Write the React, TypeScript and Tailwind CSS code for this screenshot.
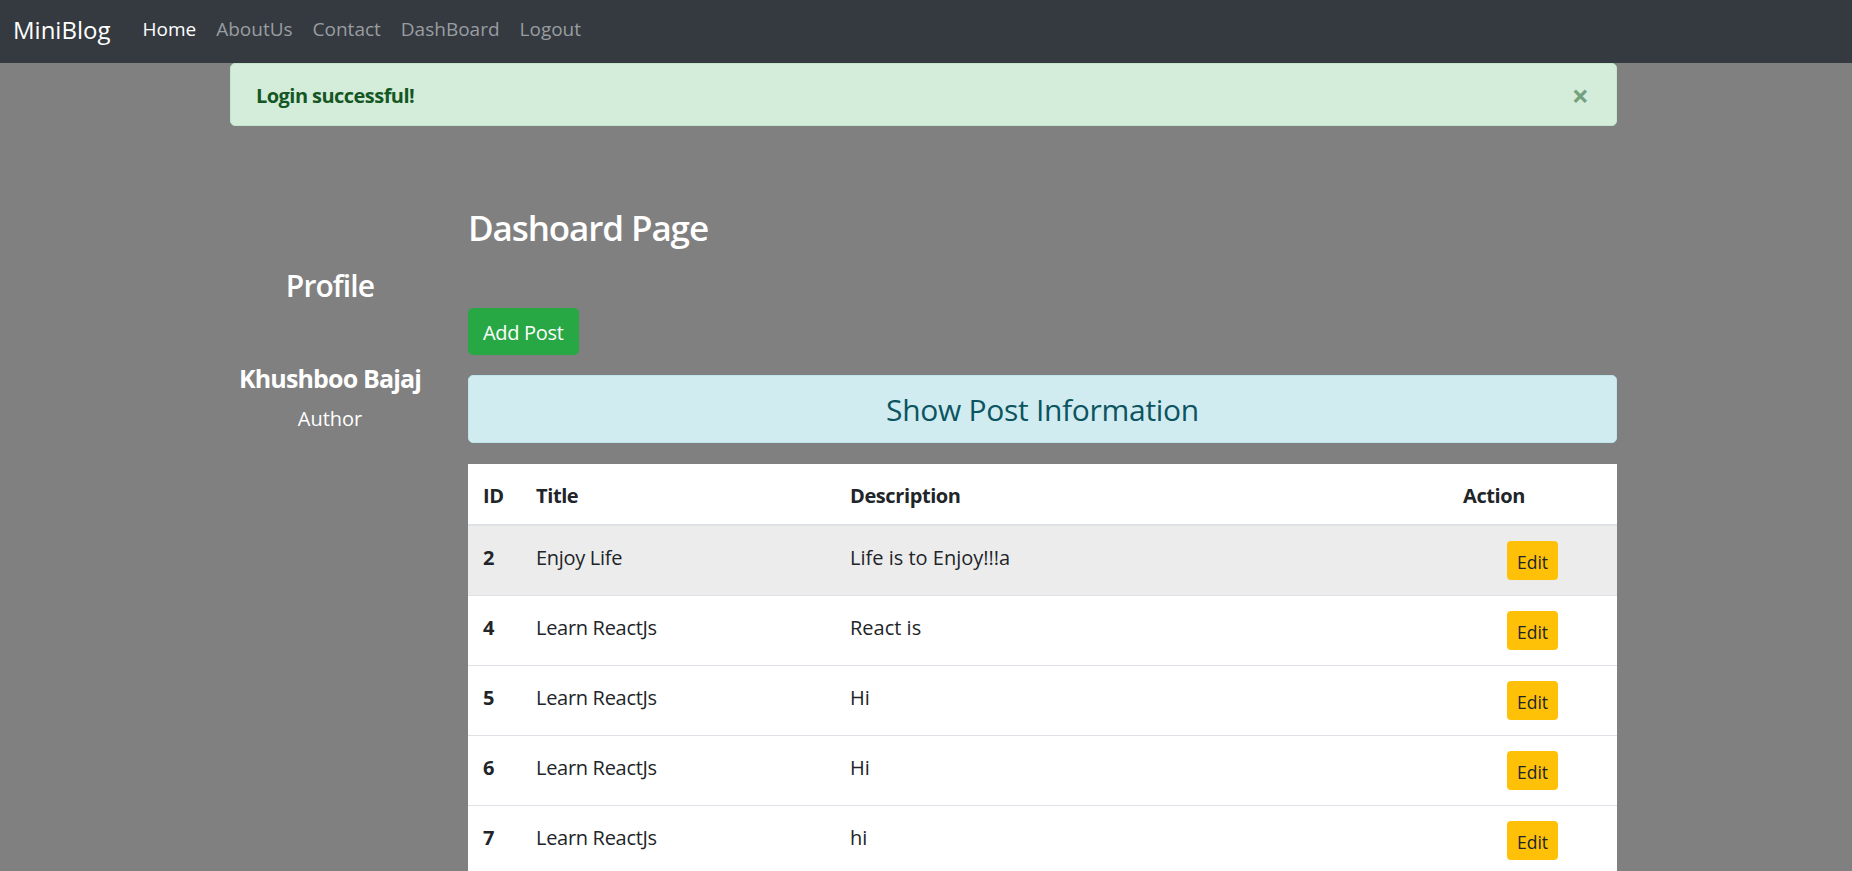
import React from "react";

const posts = [
  { id: 2, title: "Enjoy Life", desc: "Life is to Enjoy!!!a" },
  { id: 4, title: "Learn ReactJs", desc: "React is" },
  { id: 5, title: "Learn ReactJs", desc: "Hi" },
  { id: 6, title: "Learn ReactJs", desc: "Hi" },
  { id: 7, title: "Learn ReactJs", desc: "hi" },
];

export default function App() {
  return (
    <div className="min-h-[871px] bg-[#808080] font-['Open_Sans',sans-serif] text-[#212529]">
      {/* Navbar */}
      <nav className="flex h-[63px] items-center bg-[#343a40] pb-[4px] pl-[13px]">
        <span className="mr-[22px] text-[24px] text-white">MiniBlog</span>
        <a className="px-[10px] text-[19px] text-white">Home</a>
        <a className="px-[10px] text-[19px] text-[#9a9da0]">AboutUs</a>
        <a className="px-[10px] text-[19px] text-[#9a9da0]">Contact</a>
        <a className="px-[10px] text-[19px] text-[#9a9da0]">DashBoard</a>
        <a className="px-[10px] text-[19px] text-[#9a9da0]">Logout</a>
      </nav>

      <div className="ml-[230px] w-[1387px]">
        {/* Alert */}
        <div className="flex h-[63px] items-center justify-between rounded-[5px] border border-[#c3e6cb] bg-[#d4edda] pl-[25px] pr-[27px]">
          <span className="pt-[3px] text-[20px] font-bold tracking-[-0.55px] text-[#155724]">Login successful!</span>
          <span className="pt-[3px] text-[30px] font-bold leading-none text-[#155724] opacity-50">×</span>
        </div>

        <div className="flex">
          {/* Profile column */}
          <div className="flex w-[200px] flex-col items-center pt-[142px] text-white">
            <h4 className="text-[30px] font-semibold leading-[36px] tracking-[-0.9px]">Profile</h4>
            <h5 className="mt-[59px] text-[25px] font-bold leading-[30px] tracking-[-0.85px]">Khushboo Bajaj</h5>
            <p className="mt-[11px] text-[20px] leading-[30px]">Author</p>
          </div>

          {/* Main column */}
          <div className="ml-[38px] flex-1 pt-[81px]">
            <h3 className="text-[35px] font-semibold leading-[42px] tracking-[-1.1px] text-white">Dashoard Page</h3>
            <button className="mt-[59px] h-[47px] rounded-[5px] bg-[#28a745] px-[15px] pt-[2px] text-[20px] tracking-[-0.3px] text-white">
              Add Post
            </button>
            <div className="mt-[20px] flex h-[68px] items-center justify-center rounded-[5px] border border-[#bee5eb] bg-[#d1ecf1] pt-[2px]">
              <h4 className="text-[30px] font-medium leading-[36px] tracking-[-0.3px] text-[#0c5460]">Show Post Information</h4>
            </div>

            <table className="mt-[21px] w-full table-fixed border-collapse bg-white text-left text-[20px] leading-[30px]">
              <thead>
                <tr className="border-b-2 border-[#dee2e6]">
                  <th className="w-[53px] px-[15px] pt-[17px] pb-[13px] font-bold tracking-[-0.4px]">ID</th>
                  <th className="w-[314px] px-[15px] pt-[17px] pb-[13px] font-bold tracking-[-0.4px]">Title</th>
                  <th className="w-[613px] px-[15px] pt-[17px] pb-[13px] font-bold tracking-[-0.4px]">Description</th>
                  <th className="px-[15px] pt-[17px] pb-[13px] font-bold tracking-[-0.4px]">Action</th>
                </tr>
              </thead>
              <tbody>
                {posts.map((p, i) => (
                  <tr key={p.id} className={`border-t border-[#dee2e6] ${i === 0 ? "bg-[#ececec]" : ""}`}>
                    <th className="px-[15px] pt-[17px] pb-[13px] align-top font-bold">{p.id}</th>
                    <td className="px-[15px] pt-[17px] pb-[13px] align-top tracking-[-0.3px]">{p.title}</td>
                    <td className="px-[15px] pt-[17px] pb-[13px] align-top">{p.desc}</td>
                    <td className="px-[15px] py-[15px] text-center align-top">
                      <button className="h-[39px] w-[51px] rounded-[4px] bg-[#ffc107] pt-[2px] text-[17.5px] text-[#212529]">
                        Edit
                      </button>
                    </td>
                  </tr>
                ))}
              </tbody>
            </table>
          </div>
        </div>
      </div>
    </div>
  );
}
